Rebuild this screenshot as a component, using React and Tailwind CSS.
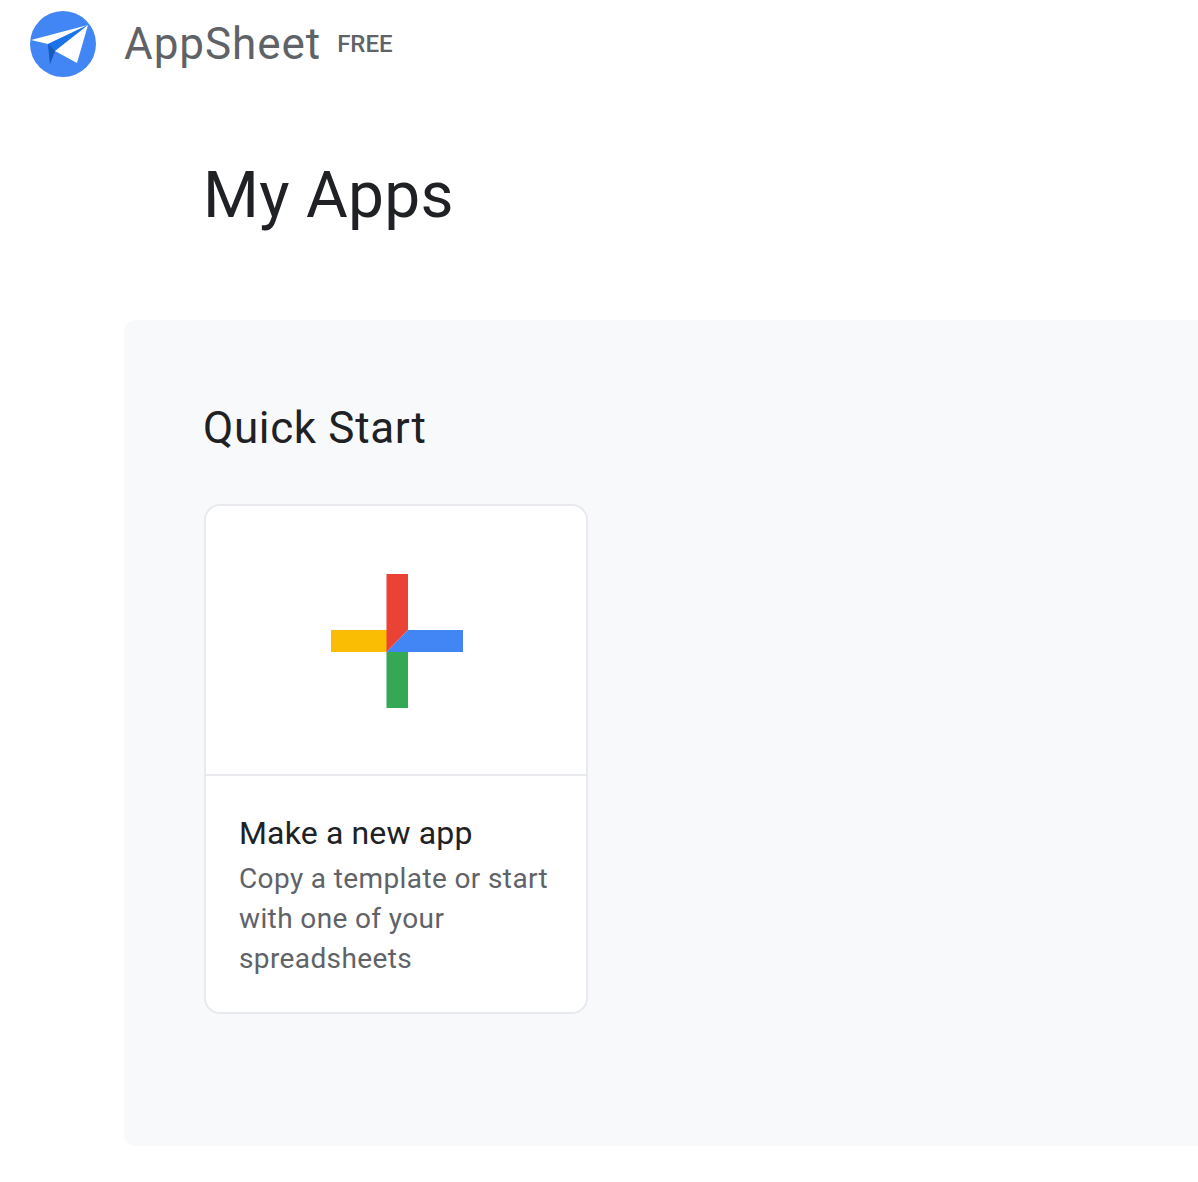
import React from 'react';

// AppSheet paper plane logo
const Logo = () => (
  <svg width="66" height="66" viewBox="30 11 66 66" className="shrink-0">
    <circle cx="63" cy="44" r="33" fill="#4285f4" />
    <polygon points="31,40 88,25 48,44" fill="#ffffff" />
    <polygon points="48,44 88,25 55,51 50,64" fill="#1a73e8" />
    <polygon points="48,44 55,51 50,64" fill="#185abc" />
    <polygon points="88,25 55,51 77,63" fill="#ffffff" />
  </svg>
);

const PlusIcon = () => (
  <svg width="132" height="134" viewBox="331 574 132 134" className="ml-[2px] mt-[2px]">
    <rect x="331" y="630" width="56" height="22" fill="#fbbc04" />
    <rect x="386.5" y="652" width="21.5" height="56" fill="#34a853" />
    <polygon points="386.5,574 408,574 408,630 386.5,652" fill="#ea4335" />
    <polygon points="386.5,652 408,630 463,630 463,652" fill="#4285f4" />
  </svg>
);

export default function App() {
  return (
    <div className="min-h-[1182px] bg-white font-['Roboto',sans-serif] overflow-hidden">
      <header className="h-[88px] flex items-center pl-[30px]">
        <Logo />
        <span className="ml-[28px] text-[44px] leading-none tracking-[0.95px] text-[#5f6368]">AppSheet</span>
        <span className="ml-[16px] text-[24px] leading-none font-medium text-[#5f6368]">FREE</span>
      </header>

      <h1 className="mt-[64px] ml-[203px] text-[64px] leading-[88px] tracking-[0.3px] text-[#202124]">My Apps</h1>

      <main className="mt-[80px] ml-[124px] h-[826px] bg-[#f8f9fa] rounded-l-xl pt-[79px] pl-[80px]">
        <h2 className="-ml-[1px] text-[44px] leading-[58px] tracking-[0.65px] text-[#202124]">Quick Start</h2>

        <div className="mt-[47px] w-[384px] h-[510px] bg-white border-2 border-[#e8eaed] rounded-2xl">
          <div className="h-[270px] border-b-2 border-[#e8eaed] flex items-center justify-center">
            <PlusIcon />
          </div>
          <div className="pt-[37px] px-[33px]">
            <div className="text-[32px] leading-[40px] tracking-[0.15px] text-[#202124]">Make a new app</div>
            <p className="mt-[6px] text-[28px] leading-[40px] tracking-[0.38px] text-[#5f6368]">
              Copy a template or start with one of your spreadsheets
            </p>
          </div>
        </div>
      </main>
    </div>
  );
}
